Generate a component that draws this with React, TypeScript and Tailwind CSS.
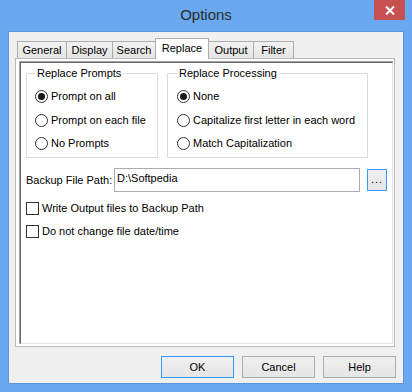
import React from "react";

const font = { fontFamily: '"Liberation Sans", Arial, sans-serif' };

function Radio({ checked, label, first }: { checked?: boolean; label: string; first?: boolean }) {
  return (
    <div className={`flex items-center gap-[3px] ${first ? "h-[24px]" : "h-[23px]"}`}>
      <span className="w-[13px] h-[13px] rounded-full border border-[#333333] bg-white flex items-center justify-center shrink-0">
        {checked && <span className="w-[7px] h-[7px] rounded-full bg-[#1a1a1a]" />}
      </span>
      <span className="text-[11px] leading-[13px] text-black whitespace-nowrap">{label}</span>
    </div>
  );
}

function Check({ label }: { label: string }) {
  return (
    <div className="flex items-center gap-[3px] h-[23px]">
      <span className="w-[13px] h-[13px] border border-[#333333] bg-white shrink-0" />
      <span className="text-[11px] leading-[13px] text-black whitespace-nowrap">{label}</span>
    </div>
  );
}

function Tab({ label, w, active }: { label: string; w: string; active?: boolean }) {
  if (active) {
    return (
      <div
        className={`${w} h-[21px] -mb-px relative z-10 bg-white border border-b-0 border-[#acacac] flex items-center justify-center text-[11px] text-black -ml-px`}
      >
        <span className="-mt-[2px]">{label}</span>
      </div>
    );
  }
  return (
    <div
      className={`${w} h-[17px] bg-gradient-to-b from-[#f2f2f2] to-[#e5e5e5] border border-b-0 border-[#acacac] flex items-center justify-center text-[11px] text-black -ml-px first:ml-0`}
    >
      {label}
    </div>
  );
}

function Btn({ label, def }: { label: string; def?: boolean }) {
  return (
    <div
      className={`w-[73px] h-[22px] border ${def ? "border-[#3399ff]" : "border-[#acacac]"} bg-gradient-to-b from-[#f0f0f0] to-[#e5e5e5] flex items-center justify-center text-[11px] text-black`}
    >
      {label}
    </div>
  );
}

export default function App() {
  return (
    <div className="w-[412px] h-[392px] bg-[#6aa9ef] flex flex-col" style={font}>
      {/* title bar */}
      <div className="h-[31px] relative flex items-center justify-center shrink-0">
        <span className="text-[15px] text-[#2b2b2b] -mt-[1px]">Options</span>
        <div className="absolute right-[7px] top-0 w-[31px] h-[20px] bg-[#c75050] flex items-center justify-center">
          <svg width="10" height="9" viewBox="0 0 10 9">
            <path d="M1 0.5 L9 8.5 M9 0.5 L1 8.5" stroke="white" strokeWidth="2" />
          </svg>
        </div>
      </div>

      {/* client */}
      <div className="mx-[8px] h-[353px] border border-[#5b95da] bg-[#f0f0f0] flex flex-col">
        <div className="pt-[6px] pl-[6px] flex flex-col">
          {/* tabs */}
          <div className="flex items-end h-[20px] pl-[2px]">
            <Tab label="General" w="w-[50px]" />
            <Tab label="Display" w="w-[47px]" />
            <Tab label="Search" w="w-[44px]" />
            <Tab label="Replace" w="w-[54px]" active />
            <Tab label="Output" w="w-[46px]" />
            <Tab label="Filter" w="w-[41px]" />
          </div>
          {/* page */}
          <div className="w-[380px] h-[289px] border border-[#b9b9b9] bg-white pl-[3px] pr-[1px] pt-[2px] pb-[2px]">
            <div className="w-full h-full border-t border-l border-[#a0a0a0] border-r-white border-b-white">
              <div className="w-full h-full border-t border-l border-t-[#696969] border-l-[#696969] border-r border-b border-r-[#e3e3e3] border-b-[#e3e3e3] bg-white pl-[5px] pt-[4px]">
                {/* groups */}
                <div className="flex gap-[9px]">
                  <fieldset className="w-[132px] h-[91px] border border-[#dcdcdc] pl-[8px]">
                    <legend className="ml-[0px] px-[2px] text-[11px] leading-[13px] text-black">Replace Prompts</legend>
                    <div className="pt-[4px] flex flex-col">
                      <Radio checked label="Prompt on all" first />
                      <Radio label="Prompt on each file" first />
                      <Radio label="No Prompts" />
                    </div>
                  </fieldset>
                  <fieldset className="w-[201px] h-[91px] border border-[#dcdcdc] pl-[9px]">
                    <legend className="ml-[0px] px-[2px] text-[11px] leading-[13px] text-black">Replace Processing</legend>
                    <div className="pt-[4px] flex flex-col">
                      <Radio checked label="None" first />
                      <Radio label="Capitalize first letter in each word" first />
                      <Radio label="Match Capitalization" />
                    </div>
                  </fieldset>
                </div>
                {/* backup */}
                <div className="flex items-center mt-[10px] h-[24px]">
                  <span className="text-[11px] text-black w-[88px]">Backup File Path:</span>
                  <div className="w-[246px] h-[24px] border border-[#acacac] bg-white pl-[2px] flex items-center text-[11px] text-black">
                    <span className="-mt-[3px]">D:\Softpedia</span>
                  </div>
                  <div className="ml-[7px] w-[20px] h-[22px] border border-[#3399ff] bg-gradient-to-b from-[#f0f0f0] to-[#e5e5e5] flex items-center justify-center text-[11px] text-black">
                    <span className="-mt-[2px] tracking-[1px]">...</span>
                  </div>
                </div>
                <div className="mt-[5px] flex flex-col">
                  <Check label="Write Output files to Backup Path" />
                  <Check label="Do not change file date/time" />
                </div>
              </div>
            </div>
          </div>
        </div>
        {/* buttons */}
        <div className="mt-[9px] flex justify-end gap-[8px] pr-[7px]">
          <Btn label="OK" def />
          <Btn label="Cancel" />
          <Btn label="Help" />
        </div>
      </div>
    </div>
  );
}
